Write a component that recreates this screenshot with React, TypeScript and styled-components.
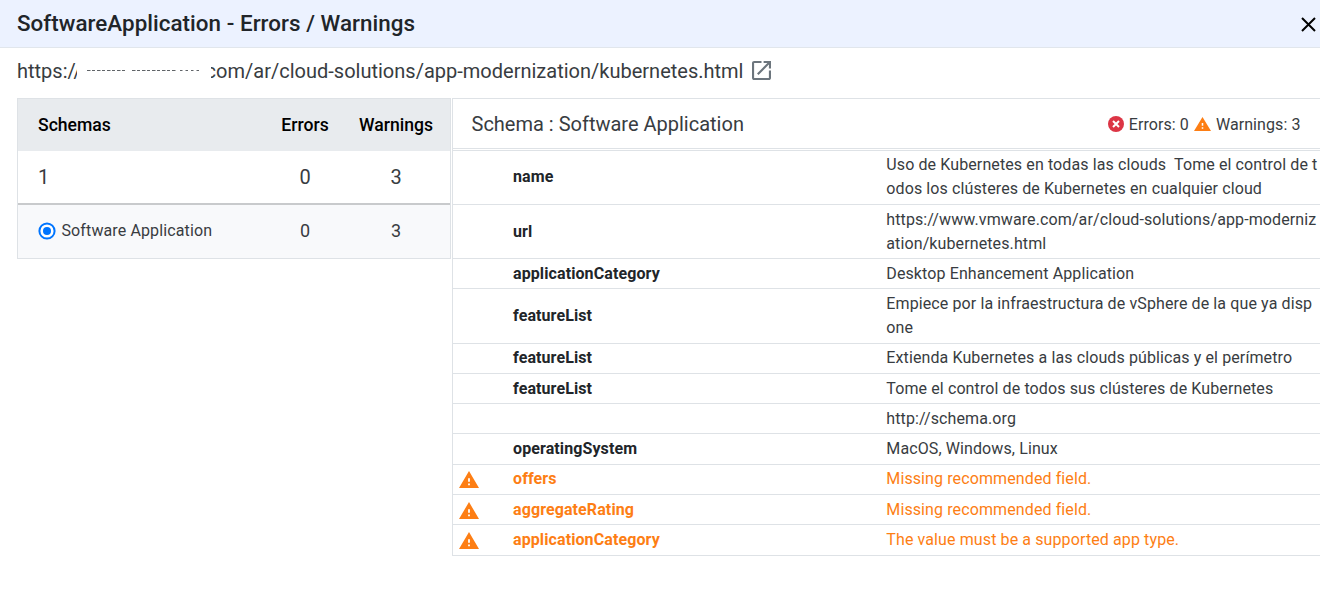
import React from 'react';
import styled, { createGlobalStyle } from 'styled-components';

const GlobalStyle = createGlobalStyle`
  * { box-sizing: border-box; }
  body {
    margin: 0;
    background: #fff;
    color: #383c41;
    font-family: Roboto, "Liberation Sans", sans-serif;
    overflow: hidden;
  }
`;

const Dialog = styled.main`
  width: 1320px;
  height: 605px;
  overflow: hidden;
`;

const Header = styled.header`
  display: flex;
  align-items: center;
  justify-content: space-between;
  height: 48px;
  padding: 0 4px 1px 17px;
  background: #ecf2ff;
  border-bottom: 1px solid #e1e6ec;
`;

const Title = styled.h1`
  margin: 0;
  color: #212529;
  font-size: 22.4px;
  font-weight: 500;
  letter-spacing: 0.04px;
  line-height: 28px;
  white-space: nowrap;
`;

const CloseButton = styled.button`
  display: flex;
  padding: 2px 0 0;
  border: 0;
  background: none;
  color: #000;
`;

const UrlBar = styled.div`
  display: flex;
  align-items: center;
  height: 50px;
  padding: 0 17px 4px;
  font-size: 20px;
  line-height: 26px;
  white-space: nowrap;
`;

const Scheme = styled.span`
  flex: none;
  width: 60px;
`;

const HiddenHost = styled.svg`
  position: relative;
  flex: none;
  width: 134px;
  height: 26px;
  background: #fff;
`;

const Path = styled.span`
  display: flex;
  justify-content: flex-end;
  width: 532.5px;
  letter-spacing: 0.005px;
`;

const OpenIcon = styled.svg`
  flex: none;
  margin: -1px 0 0 8.5px;
`;

const Panels = styled.div`
  display: flex;
  align-items: flex-start;
  gap: 1px;
  padding-left: 17px;
`;

const SchemaTable = styled.section`
  flex: none;
  width: 434px;
  border: 1px solid #dee2e6;
`;

const SchemaRow = styled.div<{ $kind: 'head' | 'total' | 'item' }>`
  display: grid;
  grid-template-columns: 241px 92px 90px;
  align-items: center;
  height: ${p => (p.$kind === 'head' ? 52 : p.$kind === 'total' ? 54 : 53)}px;
  padding-bottom: ${p => (p.$kind === 'item' ? 2 : 0)}px;
  background: ${p => (p.$kind === 'head' ? '#e8ebee' : p.$kind === 'item' ? '#f8f9fb' : '#fff')};
  color: ${p => (p.$kind === 'head' ? '#000' : 'inherit')};
  font-size: ${p => (p.$kind === 'total' ? 20 : p.$kind === 'head' ? 17.6 : 18)}px;
  font-weight: ${p => (p.$kind === 'head' ? 500 : 400)};
  border-bottom: ${p => (p.$kind === 'total' ? '2px solid #c8cacc' : '0')};
`;

const SchemaName = styled.span<{ $small?: boolean }>`
  display: flex;
  align-items: center;
  gap: ${p => (p.$small ? 5.5 : 0)}px;
  padding-left: 20px;
  font-size: ${p => (p.$small ? '16px' : 'inherit')};
  letter-spacing: ${p => (p.$small ? '0.12px' : '0')};
  white-space: nowrap;
`;

const Count = styled.span`
  text-align: center;
`;

const Detail = styled.section`
  flex: none;
  width: 880px;
  border: 1px solid #dee2e6;
`;

const DetailHeader = styled.div`
  display: flex;
  align-items: center;
  justify-content: space-between;
  height: 50px;
  padding: 1px 30.5px 0 18.5px;
  border-bottom: 1px solid #dee2e6;
  margin-bottom: 1px;
`;

const DetailTitle = styled.h2`
  margin: 0;
  font-size: 20px;
  font-weight: 400;
`;

const Summary = styled.div`
  display: flex;
  align-items: center;
  font-size: 16px;
  letter-spacing: 0.08px;
`;

const SummaryLabel = styled.span`
  margin: 0 5px;
  &:last-child { margin-right: 0; }
`;

const Field = styled.div<{ $height: number; $lift?: number; $warn?: boolean }>`
  display: grid;
  grid-template-columns: 60px 373.3px 434px;
  align-items: center;
  height: ${p => p.$height}px;
  padding-bottom: ${p => p.$lift ?? 0}px;
  border-top: 1px solid #dee2e6;
  color: ${p => (p.$warn ? '#fd7e14' : 'inherit')};
  font-size: 16px;
  line-height: 24px;
`;

const IconCell = styled.span`
  display: flex;
  padding: 1px 0 0 6px;
`;

const FieldName = styled.span<{ $warn?: boolean }>`
  color: ${p => (p.$warn ? 'inherit' : '#212529')};
  font-weight: 700;
  letter-spacing: 0.1px;
`;

const FieldValue = styled.span`
  letter-spacing: 0.11px;
  white-space: pre;
`;

const WarningIcon = ({ width, height }: { width: number; height: number }) => (
  <svg width={width} height={height} viewBox="1 2 22 19" preserveAspectRatio="none" fill="#fd7e14">
    <path d="M1 21h22L12 2 1 21zm12-3h-2v-2h2v2zm0-4h-2v-4h2v4z" />
  </svg>
);

const ErrorIcon = () => (
  <svg width="16" height="16" viewBox="0 0 16 16">
    <circle cx="8" cy="8" r="8" fill="#dc3545" />
    <path d="M5 5l6 6M11 5l-6 6" stroke="#fff" strokeWidth="2" />
  </svg>
);

const RadioIcon = () => (
  <svg width="18" height="18" viewBox="0 0 18 18">
    <circle cx="9" cy="9" r="7.6" fill="#fff" stroke="#0075ff" strokeWidth="2" />
    <circle cx="9" cy="9" r="4" fill="#0075ff" />
  </svg>
);

interface FieldData {
  name: string;
  value: string;
  height: number;
  lift?: number;
  warn?: boolean;
}

const fields: FieldData[] = [
  { name: 'name', value: 'Uso de Kubernetes en todas las clouds  Tome el control de t\nodos los clústeres de Kubernetes en cualquier cloud', height: 54, lift: 2 },
  { name: 'url', value: 'https://www.vmware.com/ar/cloud-solutions/app-moderniz\nation/kubernetes.html', height: 54 },
  { name: 'applicationCategory', value: 'Desktop Enhancement Application', height: 30 },
  { name: 'featureList', value: 'Empiece por la infraestructura de vSphere de la que ya disp\none', height: 55 },
  { name: 'featureList', value: 'Extienda Kubernetes a las clouds públicas y el perímetro', height: 30, lift: 2 },
  { name: 'featureList', value: 'Tome el control de todos sus clústeres de Kubernetes', height: 30 },
  { name: '', value: 'http://schema.org', height: 30 },
  { name: 'operatingSystem', value: 'MacOS, Windows, Linux', height: 31 },
  { name: 'offers', value: 'Missing recommended field.', height: 30, lift: 2, warn: true },
  { name: 'aggregateRating', value: 'Missing recommended field.', height: 30, warn: true },
  { name: 'applicationCategory', value: 'The value must be a supported app type.', height: 31, warn: true },
];

export default function App() {
  return (
    <Dialog>
      <GlobalStyle />
      <Header>
        <Title>SoftwareApplication - Errors / Warnings</Title>
        <CloseButton aria-label="Close">
          <svg width="16" height="16" viewBox="0 0 16 16" fill="none" stroke="currentColor" strokeWidth="2">
            <path d="M2 2l13 13M15 2l-13 13" />
          </svg>
        </CloseButton>
      </Header>
      <UrlBar>
        <Scheme>https://</Scheme>
        <HiddenHost viewBox="0 0 134 26" aria-hidden="true">
          <path d="M10 12.5h39M55 12.5h45" stroke="#606468" strokeDasharray="3.5 1.5 3 2" />
          <path d="M103 12.5h21" stroke="#606468" strokeDasharray="2.5 3" />
        </HiddenHost>
        <Path>com/ar/cloud-solutions/app-modernization/kubernetes.html</Path>
        <OpenIcon width="19" height="19" viewBox="3 3 18 18" fill="#6c757d">
          <path d="M19 19H5V5h7V3H5c-1.11 0-2 .9-2 2v14c0 1.1.89 2 2 2h14c1.1 0 2-.9 2-2v-7h-2v7zM14 3v2h3.59l-9.83 9.83 1.41 1.41L19 6.41V10h2V3h-7z" />
        </OpenIcon>
      </UrlBar>
      <Panels>
        <SchemaTable>
          <SchemaRow $kind="head">
            <SchemaName>Schemas</SchemaName>
            <Count>Errors</Count>
            <Count>Warnings</Count>
          </SchemaRow>
          <SchemaRow $kind="total">
            <SchemaName>1</SchemaName>
            <Count>0</Count>
            <Count>3</Count>
          </SchemaRow>
          <SchemaRow $kind="item">
            <SchemaName $small><RadioIcon />Software Application</SchemaName>
            <Count>0</Count>
            <Count>3</Count>
          </SchemaRow>
        </SchemaTable>
        <Detail>
          <DetailHeader>
            <DetailTitle>Schema : Software Application</DetailTitle>
            <Summary>
              <ErrorIcon />
              <SummaryLabel>Errors: 0</SummaryLabel>
              <WarningIcon width={17} height={14} />
              <SummaryLabel>Warnings: 3</SummaryLabel>
            </Summary>
          </DetailHeader>
          {fields.map((f, i) => (
            <Field key={i} $height={f.height} $lift={f.lift} $warn={f.warn}>
              <IconCell>{f.warn && <WarningIcon width={20} height={17} />}</IconCell>
              <FieldName $warn={f.warn}>{f.name}</FieldName>
              <FieldValue>{f.value}</FieldValue>
            </Field>
          ))}
        </Detail>
      </Panels>
    </Dialog>
  );
}
